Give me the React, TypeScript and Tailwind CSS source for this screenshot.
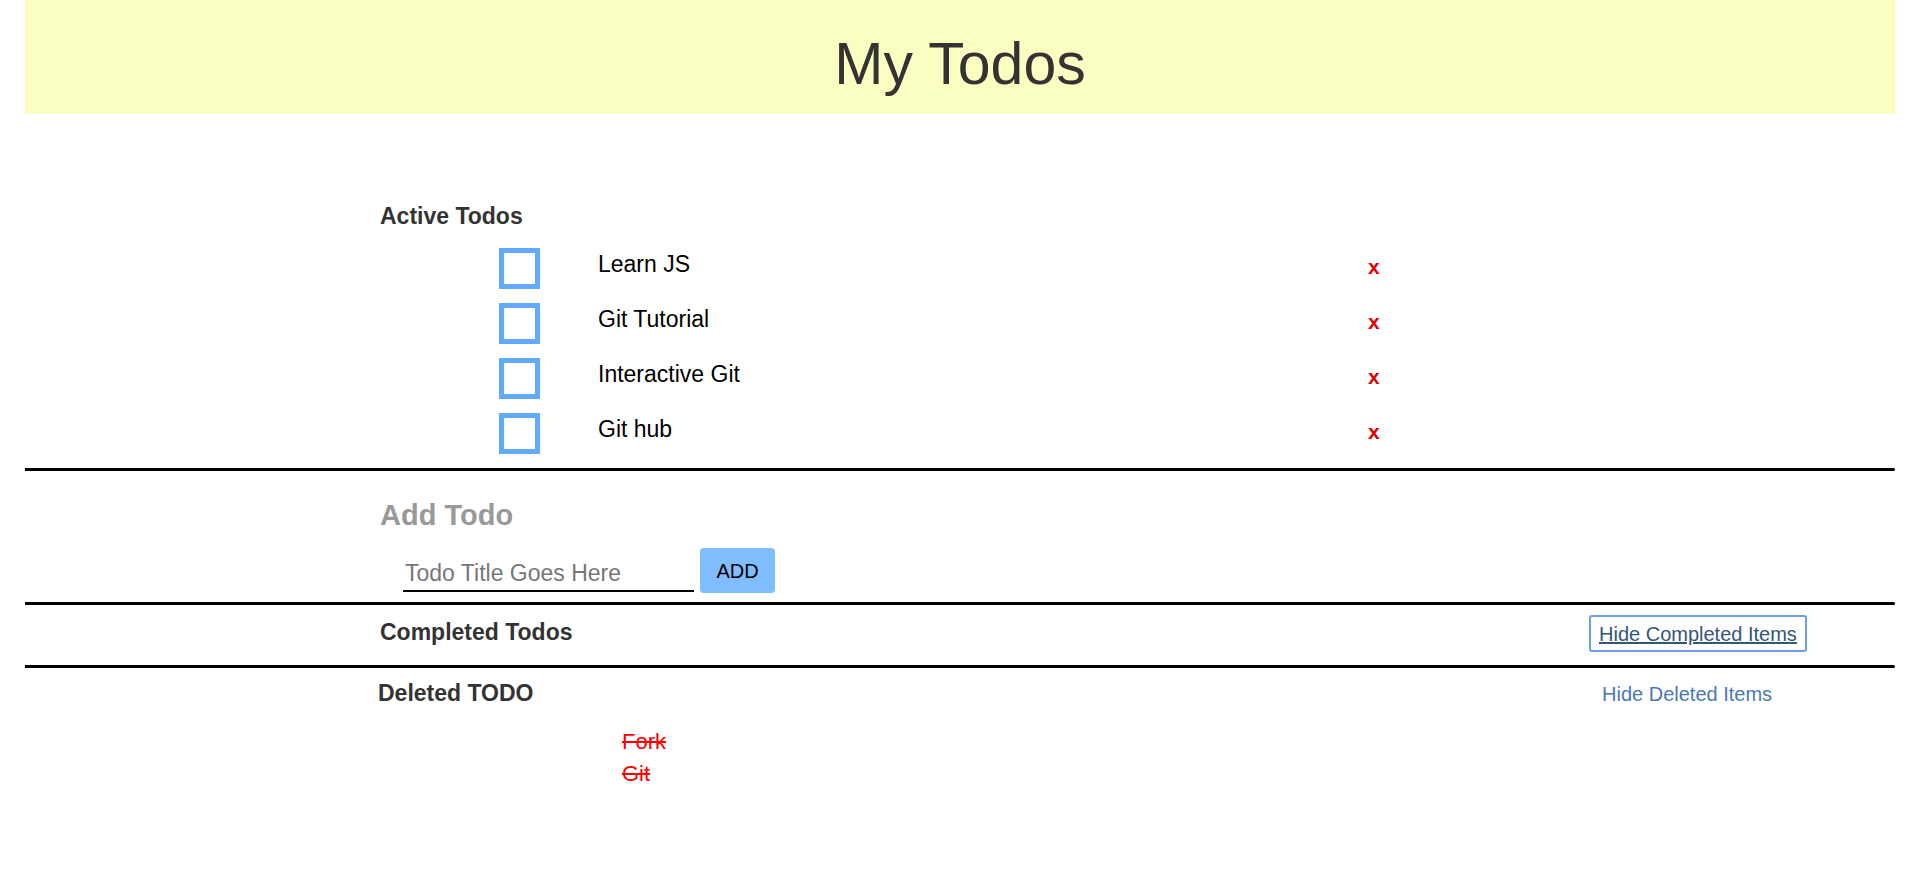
import React from "react";

const active = ["Learn JS", "Git Tutorial", "Interactive Git", "Git hub"];
const deleted = ["Fork", "Git"];

export default function App() {
  return (
    <div className="mx-[25px] font-['Liberation_Sans',Arial,sans-serif] text-[#333]">
      <header className="h-[114px] bg-[#fafec0] flex justify-center pt-[35px]">
        <h1 className="text-[59px] leading-[59px] font-normal text-[#333]">My Todos</h1>
      </header>

      <section className="pt-[89px]">
        <h3 className="pl-[355px] text-[23px] leading-[26px] font-bold text-[#333]">Active Todos</h3>
        <ul className="mt-[12px]">
          {active.map((t) => (
            <li key={t} className="h-[55px] flex items-center pl-[474px]">
              <span className="w-[41px] h-[41px] border-[5px] border-[#60aaff] bg-white shrink-0" />
              <span className="ml-[58px] w-[770px] pb-[8px] text-[23px] text-black">{t}</span>
              <span className="pb-[4px] text-[21px] font-bold text-[#e00000]">x</span>
            </li>
          ))}
        </ul>
      </section>

      <div className="mt-[7px] h-[3px] bg-black rounded-r-[2px]" />

      <section className="pt-[28px]">
        <h2 className="pl-[355px] text-[29px] leading-[32px] font-bold text-[#999]">Add Todo</h2>
        <div className="mt-[17px] flex items-end pl-[378px]">
          <input
            type="text"
            placeholder="Todo Title Goes Here"
            className="w-[291px] h-[40px] mb-[1px] pt-[4px] pl-[2px] bg-transparent border-0 border-b-2 border-black outline-none text-[23px] text-black placeholder:text-[#777]"
          />
          <button className="ml-[6px] w-[75px] h-[45px] rounded-[4px] bg-[#80bdff] text-[20px] text-black">
            ADD
          </button>
        </div>
      </section>

      <div className="mt-[9px] h-[3px] bg-black rounded-r-[2px]" />

      <section className="h-[60px] pt-[10px] flex items-start pl-[355px] pr-[90px]">
        <h3 className="flex-1 mt-[4px] text-[23px] leading-[26px] font-bold text-[#333]">Completed Todos</h3>
        <div className="w-[216px]">
          <button className="h-[37px] px-[8px] border-2 border-[#6d9eeb] rounded-[3px] text-[20px] text-[#34557a] underline whitespace-nowrap">
            Hide Completed Items
          </button>
        </div>
      </section>

      <div className="h-[3px] bg-black rounded-r-[2px]" />

      <section className="flex items-start pl-[353px] pr-[90px]">
        <h3 className="flex-1 mt-[12px] text-[23px] leading-[26px] font-bold text-[#333]">Deleted TODO</h3>
        <div className="w-[216px]">
          <button className="mt-[15px] ml-[13px] text-[20px] leading-[22px] text-[#4a78b5] whitespace-nowrap">
            Hide Deleted Items
          </button>
        </div>
      </section>
      <ul className="mt-[18px] pl-[597px]">
        {deleted.map((t) => (
          <li key={t} className="text-[22px] leading-[32px] text-[#ff0000] line-through">
            {t}
          </li>
        ))}
      </ul>
    </div>
  );
}
